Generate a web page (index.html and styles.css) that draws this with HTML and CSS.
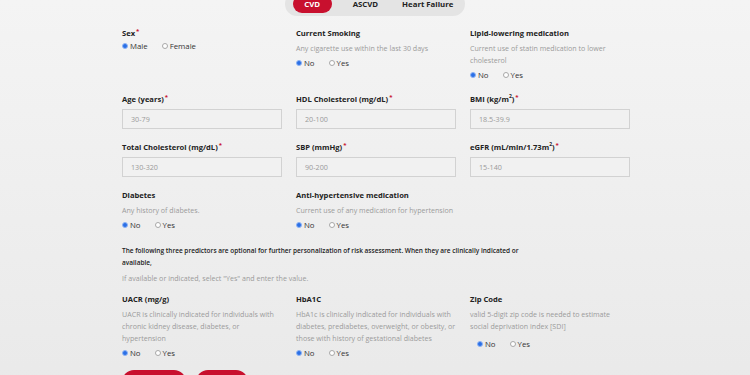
FILE: index.html
```html
<!DOCTYPE html>
<html lang="en">
<head>
    <meta charset="UTF-8" />
    <meta name="viewport" content="width=device-width, initial-scale=1.0" />
    <link rel="stylesheet" href="styles.css">
</head>
<body>
    <nav class="tabs">
        <button class="tab tab--active">CVD</button>
        <button class="tab">ASCVD</button>
        <button class="tab">Heart Failure</button>
    </nav>
    <main>
        <section class="grid">
            <div class="field">
                <label>Sex<span class="req">*</span></label>
                <div class="radios radios--tight">
                    <label class="option"><input type="radio" name="sex" checked /> Male</label>
                    <label class="option"><input type="radio" name="sex" /> Female</label>
                </div>
            </div>
            <div class="field">
                <label>Current Smoking</label>
                <p class="hint">Any cigarette use within the last 30 days</p>
                <div class="radios">
                    <label class="option"><input type="radio" name="smoking" checked /> No</label>
                    <label class="option"><input type="radio" name="smoking" /> Yes</label>
                </div>
            </div>
            <div class="field">
                <label>Lipid-lowering medication</label>
                <p class="hint">Current use of statin medication to lower cholesterol</p>
                <div class="radios">
                    <label class="option"><input type="radio" name="statin" checked /> No</label>
                    <label class="option"><input type="radio" name="statin" /> Yes</label>
                </div>
            </div>

            <div class="field">
                <label>Age (years)<span class="req">*</span></label>
                <input type="text" class="text-input" placeholder="30-79" />
            </div>
            <div class="field">
                <label>HDL Cholesterol (mg/dL)<span class="req">*</span></label>
                <input type="text" class="text-input" placeholder="20-100" />
            </div>
            <div class="field">
                <label>BMI (kg/m<sup>2</sup>)<span class="req">*</span></label>
                <input type="text" class="text-input" placeholder="18.5-39.9" />
            </div>

            <div class="field">
                <label>Total Cholesterol (mg/dL)<span class="req">*</span></label>
                <input type="text" class="text-input" placeholder="130-320" />
            </div>
            <div class="field">
                <label>SBP (mmHg)<span class="req">*</span></label>
                <input type="text" class="text-input" placeholder="90-200" />
            </div>
            <div class="field">
                <label>eGFR (mL/min/1.73m<sup>2</sup>)<span class="req">*</span></label>
                <input type="text" class="text-input" placeholder="15-140" />
            </div>

            <div class="field">
                <label>Diabetes</label>
                <p class="hint">Any history of diabetes.</p>
                <div class="radios">
                    <label class="option"><input type="radio" name="diabetes" checked /> No</label>
                    <label class="option"><input type="radio" name="diabetes" /> Yes</label>
                </div>
            </div>
            <div class="field">
                <label>Anti-hypertensive medication</label>
                <p class="hint">Current use of any medication for hypertension</p>
                <div class="radios">
                    <label class="option"><input type="radio" name="bpmed" checked /> No</label>
                    <label class="option"><input type="radio" name="bpmed" /> Yes</label>
                </div>
            </div>
        </section>

        <div class="note">
            <p class="note-title">The following three predictors are optional for further personalization of risk assessment. When they are clinically indicated or available,</p>
            <p class="hint">If available or indicated, select "Yes" and enter the value.</p>
        </div>

        <section class="grid">
            <div class="field">
                <label>UACR (mg/g)</label>
                <p class="hint">UACR is clinically indicated for individuals with chronic kidney disease, diabetes, or hypertension</p>
                <div class="radios">
                    <label class="option"><input type="radio" name="uacr" checked /> No</label>
                    <label class="option"><input type="radio" name="uacr" /> Yes</label>
                </div>
            </div>
            <div class="field">
                <label>HbA1C</label>
                <p class="hint">HbA1c is clinically indicated for individuals with diabetes, prediabetes, overweight, or obesity, or those with history of gestational diabetes</p>
                <div class="radios">
                    <label class="option"><input type="radio" name="hba1c" checked /> No</label>
                    <label class="option"><input type="radio" name="hba1c" /> Yes</label>
                </div>
            </div>
            <div class="field">
                <label>Zip Code</label>
                <p class="hint">valid 5-digit zip code is needed to estimate social deprivation index [SDI]</p>
                <div class="radios radios--indent">
                    <label class="option"><input type="radio" name="zip" checked /> No</label>
                    <label class="option"><input type="radio" name="zip" /> Yes</label>
                </div>
            </div>
        </section>

        <div class="actions">
            <button class="btn btn--wide">Calculate</button>
            <button class="btn">Reset</button>
        </div>
    </main>
</body>
</html>
```

FILE: styles.css
```css
html, body {
    margin: 0;
    padding: 0;
    font-family: 'Open Sans', sans-serif;
    color: #222;
}
* {
    box-sizing: border-box;
}
body {
    background: linear-gradient(#f4f4f4, #e9e9e9);
    min-height: 375px;
    overflow: hidden;
}
:root {
    --red: #c8102e;
    --muted: #9b9b9b;
}
.tabs {
    display: flex;
    align-items: center;
    width: fit-content;
    margin: -8px auto 0;
    padding: 3px 0 3px 8px;
    background-color: #e4e4e4;
    border-radius: 13px;
}
.tab {
    height: 18px;
    padding: 0 12px;
    border: none;
    border-radius: 9px;
    background: none;
    font-family: inherit;
    font-size: 7.8px;
    font-weight: 700;
    color: #222;
    white-space: nowrap;
}
.tab--active {
    width: 39px;
    padding: 0;
    margin-right: 9px;
    background-color: var(--red);
    color: #fff;
}
main {
    width: 506px;
    margin: 11px auto 0;
}
.grid {
    display: grid;
    grid-template-columns: repeat(3, 160px);
    column-gap: 14px;
    row-gap: 12px;
}
.field > label {
    display: block;
    font-size: 7.6px;
    font-weight: 700;
    line-height: 12px;
}
.req {
    color: var(--red);
    font-size: 6px;
    vertical-align: top;
    position: relative;
    top: -2px;
    margin-left: 1px;
}
sup {
    font-size: 5px;
    line-height: 0;
}
.hint {
    margin: 3px 0 0;
    font-size: 7.1px;
    line-height: 12px;
    color: var(--muted);
}
.radios {
    display: flex;
    gap: 14px;
    margin-top: 3px;
    height: 12px;
    align-items: center;
}
.radios--tight {
    margin-top: 1px;
}
.radios--indent {
    margin: 6px 0 0 7px;
}
.option {
    display: flex;
    align-items: center;
    gap: 2px;
    font-size: 7.8px;
    font-weight: 500;
    color: #333;
}
input[type="radio"] {
    -webkit-appearance: none;
    appearance: none;
    width: 6px;
    height: 6px;
    margin: 0;
    border: 1px solid #a8a8a8;
    border-radius: 50%;
    background-color: #fff;
}
input[type="radio"]:checked {
    border-color: #8fb4f4;
    background-color: #2a6fe6;
}
.text-input {
    display: block;
    width: 100%;
    height: 20px;
    margin-top: 4px;
    padding: 0 8px;
    border: 1px solid #d2d2d2;
    background-color: #f1f1f1;
    font-family: inherit;
    font-size: 7.2px;
}
.text-input::placeholder {
    color: #9a9a9a;
}
.note {
    width: 405px;
    margin-top: 14px;
    margin-bottom: 9px;
}
.note-title {
    margin: 0;
    font-size: 6.5px;
    font-weight: 600;
    line-height: 12px;
    color: #222;
}
.actions {
    display: flex;
    gap: 10px;
    margin-top: 11px;
}
.btn {
    width: 52px;
    height: 34px;
    border: none;
    border-radius: 12px;
    background-color: var(--red);
    color: #fff;
    font-family: inherit;
    font-size: 7px;
    font-weight: 700;
}
.btn--wide {
    width: 64px;
}
```
